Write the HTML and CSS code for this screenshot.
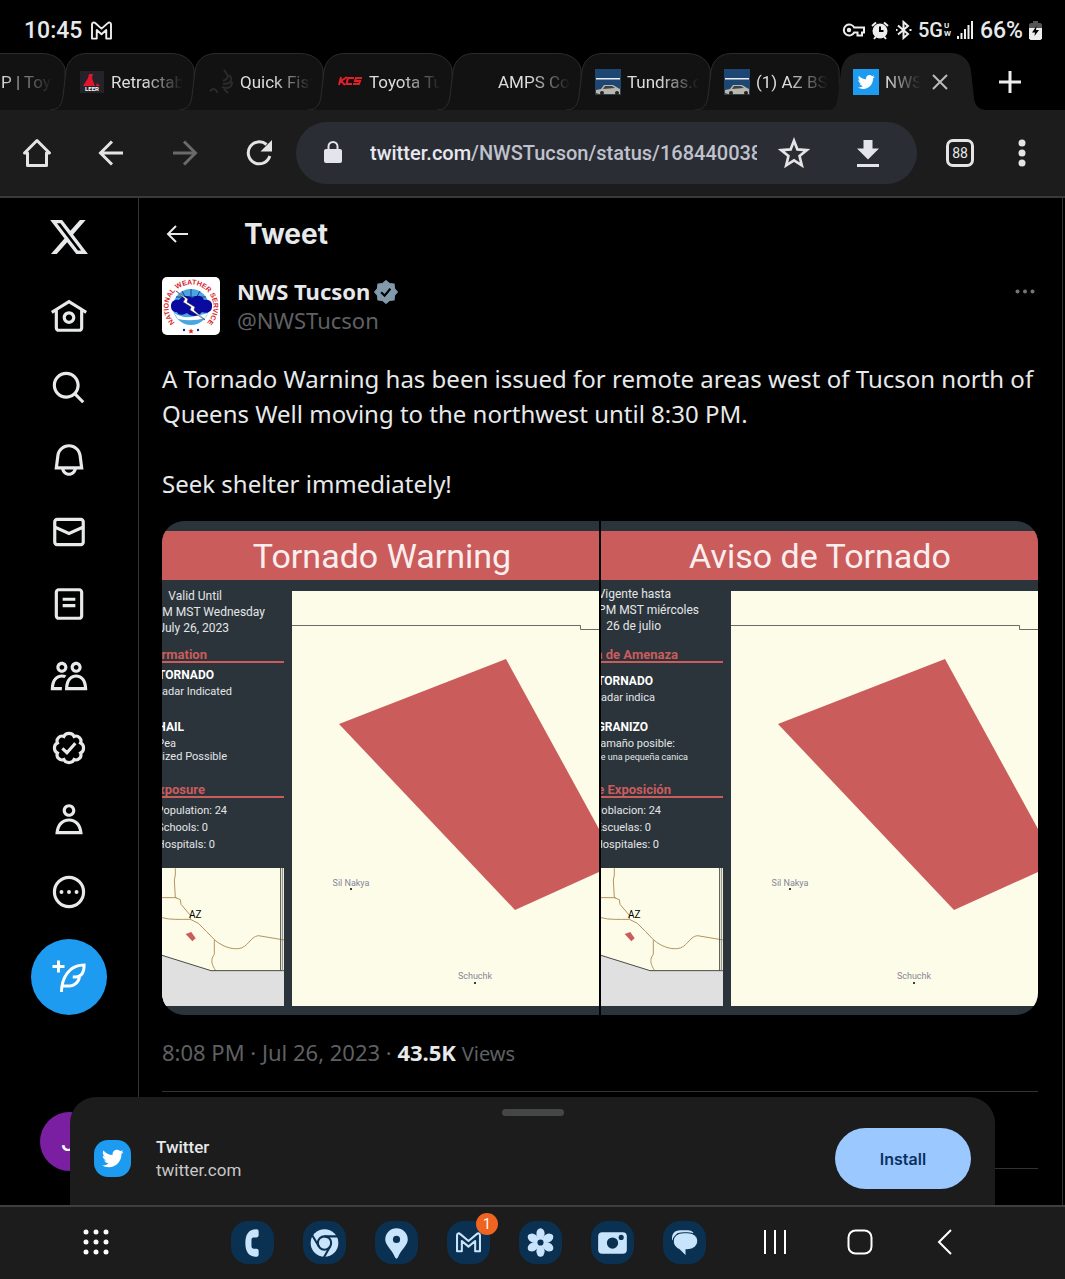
FILE: index.html
```html
<!DOCTYPE html>
<html lang="en">
<head>
    <meta charset="UTF-8">
    <meta name="viewport" content="width=device-width, initial-scale=1.0">
    <title>NWS Tucson on Twitter</title>
    <link rel="stylesheet" href="styles.css">
</head>
<body>

<!-- shared shapes -->
<svg class="defs" aria-hidden="true">
    <symbol id="tab-shape" viewBox="0 0 129 57" overflow="visible">
        <path d="M-14 57C-5 57-2 51-1 43L2 18C4 6 12 .5 23 .5H107C119 .5 128 7 130 16L131 57"/>
    </symbol>
    <symbol id="tab-active" viewBox="0 0 137 57" overflow="visible">
        <path d="M-10 57C-3 57-1 51 0 43L3 18C5 6 12 0 23 0H112C124 0 132 7 133 18L136 45C137 53 141 57 149 57"/>
    </symbol>
    <symbol id="bird" viewBox="0 0 24 24">
        <path d="M23.643 4.937c-.835.37-1.732.62-2.675.733.962-.576 1.7-1.49 2.048-2.578-.9.534-1.897.922-2.958 1.13-.85-.904-2.06-1.47-3.4-1.47-2.572 0-4.658 2.086-4.658 4.66 0 .364.042.718.12 1.06-3.873-.195-7.304-2.05-9.602-4.868-.4.69-.63 1.49-.63 2.342 0 1.616.823 3.043 2.072 3.878-.764-.025-1.482-.234-2.11-.583v.06c0 2.257 1.605 4.14 3.737 4.568-.392.106-.803.162-1.227.162-.3 0-.593-.028-.877-.082.593 1.85 2.313 3.198 4.352 3.234-1.595 1.25-3.604 1.995-5.786 1.995-.376 0-.747-.022-1.112-.065 2.062 1.323 4.51 2.093 7.14 2.093 8.57 0 13.255-7.098 13.255-13.254 0-.2-.005-.402-.014-.602.91-.658 1.7-1.477 2.323-2.41z"/>
    </symbol>
    <symbol id="gmail" viewBox="0 0 24 20">
        <path d="M2 18.500V3.500C2 1.500 4 1 5.400 2.200L12 8 18.600 2.200C20 1 22 1.500 22 3.500V18.500H17V9.500L12 14 7 9.500V18.500Z"/>
    </symbol>
    <symbol id="tundras" viewBox="0 0 26 26">
        <path fill="#1d4673" d="M0 0h26v26H0z"/>
        <path fill="#33404a" d="M0 20h26v6H0z"/>
        <path fill="#e8eef4" d="M1 9h24v1.500H1z"/>
        <path fill="#b9b6ae" d="M1 21l5-1 3-4h9l5 3 2 1v5H4l-3-1z"/>
        <path fill="#3a4148" d="M8 20l2-3h7l3 2z"/>
        <circle cx="7" cy="24" r="2" fill="#222"/><circle cx="22" cy="24" r="2" fill="#222"/>
    </symbol>
    <!-- main map and state inset, same on both alert cards -->
    <symbol id="alert-base" viewBox="0 0 437 494">
        <path fill="#2b343b" d="M0 0h437v494H0z"/>
        <path fill="#cb5c5c" d="M0 10h437v49H0z"/>
        <path fill="#fdfce8" d="M130 70h307v415H130z"/>
        <path fill="none" stroke="#6b6b66" d="M130 104.500H418.500V108.500H437"/>
        <path fill="#cb5c5c" d="M177 203L344 138 437 308V351L353 389Z"/>
        <path fill="#cb5c5c" d="M0 140h122v2H0zM0 275h122v2H0z"/>
        <circle cx="189" cy="368" r="1"/><circle cx="313" cy="462" r="1"/>
        <text class="place" x="189" y="365">Sil Nakya</text>
        <text class="place" x="313" y="458">Schuchk</text>
        <path fill="#fdfce8" d="M0 347h122v138H0z"/>
        <path fill="#e0e0e0" d="M0 434L49 449.500H122V485H0z"/>
        <g transform="translate(-12 244) scale(.3333)" fill="none" stroke-width="3">
            <path stroke="#b3935f" d="M76 310V330L73 345 76 398 91 404 93 418 122 452 121 463 145 475 170 500 193 524C215 543 240 553 265 551 295 548 300 515 325 512L402 525M36 398H80M36 458C60 465 90 463 121 463M193 524V568C180 585 186 600 197 617"/>
            <path stroke="#4a4a44" d="M36 571L183 617H402M392 309V617"/>
            <path stroke="#888" d="M398 309V617"/>
            <path fill="#cb5c5c" d="M107 507L124 501 137 520 127 529Z"/>
        </g>
        <text class="state" x="27" y="397">AZ</text>
    </symbol>
</svg>

<header class="status-bar">
    <div class="status-left">
        <span class="clock">10:45</span>
        <svg class="outline" width="23" height="19"><use href="#gmail"/></svg>
    </div>
    <div class="status-right">
        <svg width="23" height="16" viewBox="0 0 23 16" fill="none" stroke="#eee" stroke-width="2"><path d="M12.200 5.500H22V10.500H20V13.500H15.500V10.500H12.200A5.500 5.500 0 1 1 12.200 5.500Z"/><circle cx="7" cy="8" r="1.200"/></svg>
        <svg width="18" height="19" viewBox="0 0 18 19"><circle cx="9" cy="10" r="7.500" fill="#eee"/><path d="M9 5.500V10H12.500" stroke="#000" stroke-width="2" fill="none"/><path d="M1 5L5 1.500M17 5L13 1.500M3 18L5 15.500M15 18L13 15.500" stroke="#eee" stroke-width="2"/></svg>
        <svg width="17" height="20" viewBox="0 0 17 20" fill="none" stroke="#eee" stroke-width="2"><path d="M3 5.500L13 14 8.500 18V2L13 6 3 14.500"/><path d="M1 10H2.500M14.500 10H16.500"/></svg>
        <span class="network">5G</span><span class="uw">U<br>W</span>
        <svg width="17" height="18" viewBox="0 0 17 18" fill="#eee"><path d="M0 15h2v3H0zM3.500 12h2v6h-2zM7 8h2v10H7zM10.500 4h2v14h-2zM14 0h2v18h-2z"/></svg>
        <span class="battery">66%</span>
        <svg width="13" height="19" viewBox="0 0 13 19"><path fill="#555" d="M4 0h5v2h2.500L13 3.500V8H0V3.500L1.500 2H4z"/><path fill="#eee" d="M0 7h13v10.500L11.500 19h-10L0 17.500z"/><path d="M7.500 5L3 11.500H6L5.500 15 10 9H7z"/></svg>
    </div>
</header>

<div class="tabs">
    <div class="tab tab-cut">
        <svg class="tab-bg"><use href="#tab-shape"/></svg>
        <span class="tab-title">P | Toyo</span>
    </div>
    <div class="tab">
        <svg class="tab-bg"><use href="#tab-shape"/></svg>
        <svg class="favicon" viewBox="0 0 26 26"><path fill="#262229" d="M1 2h24v22H1z"/><path fill="#e0162b" d="M10 5h4l-1 4 3 8h-12l5-8zM18 14l3 3h-4z"/><text class="leer" x="13" y="22">LEER</text></svg>
        <span class="tab-title">Retractab</span>
    </div>
    <div class="tab">
        <svg class="tab-bg"><use href="#tab-shape"/></svg>
        <svg class="favicon" viewBox="0 0 26 26" fill="none" stroke="#2b2b2b" stroke-width="2"><path d="M16 1C20 6 22 9 15 12M21 6C25 10 24 15 15 15M24 13C24 19 19 20 14 18M2 22C6 18 9 21 9 24M16 20L20 24"/></svg>
        <span class="tab-title">Quick Fist</span>
    </div>
    <div class="tab">
        <svg class="tab-bg"><use href="#tab-shape"/></svg>
        <svg class="favicon" viewBox="0 0 26 26" fill="none" stroke="#e01f26" stroke-width="2"><path d="M4 8L2 16M10 8L4 12 8 16M17 9H11L9.500 15H15M25 9H19L18 12H23L22 15H16"/></svg>
        <span class="tab-title">Toyota Tu</span>
    </div>
    <div class="tab">
        <svg class="tab-bg"><use href="#tab-shape"/></svg>
        <svg class="favicon" viewBox="0 0 26 26"></svg>
        <span class="tab-title">AMPS Cor</span>
    </div>
    <div class="tab">
        <svg class="tab-bg"><use href="#tab-shape"/></svg>
        <svg class="favicon"><use href="#tundras"/></svg>
        <span class="tab-title">Tundras.co</span>
    </div>
    <div class="tab">
        <svg class="tab-bg"><use href="#tab-shape"/></svg>
        <svg class="favicon"><use href="#tundras"/></svg>
        <span class="tab-title">(1) AZ BS</span>
    </div>
    <div class="tab active">
        <svg class="tab-bg"><use href="#tab-active"/></svg>
        <svg class="favicon favicon-twitter"><use href="#bird"/></svg>
        <span class="tab-title">NWS</span>
        <button type="button" class="tab-close" aria-label="Close tab"><svg width="16" height="16" viewBox="0 0 16 16" stroke="#bbb" stroke-width="2"><path d="M1 1L15 15M15 1L1 15"/></svg></button>
    </div>
    <button type="button" class="new-tab" aria-label="New tab"><svg width="22" height="22" viewBox="0 0 22 22" stroke="#eee" stroke-width="3"><path d="M11 0V22M0 11H22"/></svg></button>
</div>

<div class="toolbar">
    <button type="button" aria-label="Home"><svg width="30" height="30" viewBox="0 0 30 30" fill="none" stroke="#e4e4e4" stroke-width="3" stroke-linejoin="round" stroke-linecap="round"><path d="M2.500 15L15 2.500 27.500 15H24.500V27.500H5.500V15Z"/></svg></button>
    <button type="button" aria-label="Back"><svg width="26" height="26" viewBox="0 0 26 26" fill="none" stroke="#e4e4e4" stroke-width="3"><path d="M25 13H3M14 1.500L2.500 13 14 24.500"/></svg></button>
    <button type="button" aria-label="Forward"><svg width="26" height="26" viewBox="0 0 26 26" fill="none" stroke="#6a6a6a" stroke-width="3"><path d="M1 13H23M12 1.500L23.500 13 12 24.500"/></svg></button>
    <button type="button" aria-label="Reload"><svg width="26" height="26" viewBox="0 0 26 26"><path fill="none" stroke="#e4e4e4" stroke-width="3" d="M20.500 4.500A11 11 0 1 0 23.800 16"/><path fill="#e4e4e4" d="M26 0V11.500H14.500Z"/></svg></button>
    <div class="omnibox">
        <svg class="lock" width="18" height="24" viewBox="0 0 18 24"><path fill="#e4e4ec" d="M2 8h14a2 2 0 0 1 2 2v10a2 2 0 0 1-2 2H2a2 2 0 0 1-2-2V10a2 2 0 0 1 2-2z"/><path fill="none" stroke="#e4e4ec" stroke-width="2" d="M4.500 9V5.500a4.500 4.500 0 0 1 9 0V9"/></svg>
        <span class="url"><b>twitter.com</b>/NWSTucson/status/1684400380</span>
        <button type="button" aria-label="Bookmark"><svg width="32" height="32" viewBox="0 0 30 30" fill="none" stroke="#e4e4e4" stroke-width="2.500"><path d="M15 3.500L18.200 11.600 27 12.300 20.200 17.900 22.300 26.500 15 21.900 7.700 26.500 9.800 17.900 3 12.300 11.800 11.600Z"/></svg></button>
        <button type="button" aria-label="Download"><svg width="22" height="28" viewBox="0 0 22 28" fill="#e4e4ec"><path d="M6.500 1h9v8.500H22L11 20.500 0 9.500h6.500zM0 25h22v3H0z"/></svg></button>
    </div>
    <button type="button" class="tab-count"><span>88</span></button>
    <button type="button" class="menu" aria-label="Menu"><svg width="8" height="28" viewBox="0 0 8 28" fill="#e4e4e4"><circle cx="4" cy="4" r="3.500"/><circle cx="4" cy="14" r="3.500"/><circle cx="4" cy="24" r="3.500"/></svg></button>
</div>

<main class="page">
    <nav class="sidebar">
        <a class="logo" href="#" aria-label="X"><svg viewBox="0 0 24 24"><path d="M18.244 2.250h3.308l-7.227 8.260 8.502 11.240H16.170l-5.214-6.817L4.990 21.750H1.680l7.730-8.835L1.254 2.250H8.080l4.713 6.231zm-1.161 17.520h1.833L7.084 4.126H5.117z"/></svg></a>
        <a href="#" aria-label="Home"><svg viewBox="0 0 24 24"><path d="M12 9c-2.209 0-4 1.791-4 4s1.791 4 4 4 4-1.791 4-4-1.791-4-4-4zm0 6c-1.105 0-2-.895-2-2s.895-2 2-2 2 .895 2 2-.895 2-2 2zm0-13.304L.622 8.807l1.060 1.696L3 9.679V19.500C3 20.881 4.119 22 5.500 22h13c1.381 0 2.500-1.119 2.500-2.500V9.679l1.318.824 1.060-1.696L12 1.696zM19 19.500c0 .276-.224.500-.500.500h-13c-.276 0-.500-.224-.500-.500V8.429l7-4.375 7 4.375V19.500z"/></svg></a>
        <a href="#" aria-label="Search"><svg viewBox="0 0 24 24"><path d="M10.250 3.750c-3.590 0-6.500 2.910-6.500 6.500s2.910 6.500 6.500 6.500c1.795 0 3.419-.726 4.596-1.904 1.178-1.177 1.904-2.801 1.904-4.596 0-3.590-2.910-6.500-6.500-6.500zm-8.500 6.500c0-4.694 3.806-8.500 8.500-8.500s8.500 3.806 8.500 8.500c0 1.986-.682 3.815-1.824 5.262l4.781 4.781-1.414 1.414-4.781-4.781c-1.447 1.142-3.276 1.824-5.262 1.824-4.694 0-8.500-3.806-8.500-8.500z"/></svg></a>
        <a href="#" aria-label="Notifications"><svg viewBox="0 0 24 24"><path d="M19.993 9.042C19.480 5.017 16.054 2 11.996 2s-7.490 3.021-7.999 7.051L2.866 18H7.100c.463 2.282 2.481 4 4.900 4s4.437-1.718 4.900-4h4.236l-1.143-8.958zM12 20c-1.306 0-2.417-.835-2.829-2h5.658c-.412 1.165-1.523 2-2.829 2zm-6.866-4l.847-6.698C6.364 6.272 8.941 4 11.996 4s5.627 2.268 6.013 5.295L18.864 16H5.134z"/></svg></a>
        <a href="#" aria-label="Messages"><svg viewBox="0 0 24 24"><path d="M1.998 5.500c0-1.381 1.119-2.500 2.500-2.500h15c1.381 0 2.500 1.119 2.500 2.500v13c0 1.381-1.119 2.500-2.500 2.500h-15c-1.381 0-2.500-1.119-2.500-2.500v-13zm2.500-.500c-.276 0-.500.224-.500.500v2.764l8 3.638 8-3.636V5.500c0-.276-.224-.500-.500-.500h-15zm15.500 5.463l-8 3.636-8-3.638V18.500c0 .276.224.500.500.500h15c.276 0 .500-.224.500-.500v-8.037z"/></svg></a>
        <a href="#" aria-label="Lists"><svg viewBox="0 0 24 24"><path d="M3 4.500C3 3.120 4.120 2 5.500 2h13C19.880 2 21 3.120 21 4.500v15c0 1.380-1.120 2.500-2.500 2.500h-13C4.120 22 3 20.880 3 19.500v-15zM5.500 4c-.280 0-.500.220-.500.500v15c0 .280.220.500.500.500h13c.280 0 .500-.220.500-.500v-15c0-.280-.220-.500-.500-.500h-13zM16 10H8V8h8v2zm-8 2h8v2H8v-2z"/></svg></a>
        <a href="#" aria-label="Communities"><svg viewBox="0 0 24 24"><path d="M7.501 19.917L7.471 21H.472l.029-1.027c.184-6.618 3.736-8.977 7-8.977.963 0 1.950.212 2.870.672-.444.478-.851 1.030-1.212 1.656-.507-.204-1.054-.329-1.658-.329-2.767 0-4.570 2.223-4.938 6.004H7.560c-.023.302-.050.599-.059.918zm15.998.056L23.528 21H9.472l.029-1.027c.184-6.618 3.736-8.977 7-8.977s6.816 2.358 7 8.977zM21.437 19c-.367-3.781-2.170-6.004-4.938-6.004s-4.570 2.223-4.938 6.004h9.875zm-4.938-9c-.799 0-1.527-.279-2.116-.730-.836-.640-1.384-1.638-1.384-2.770 0-1.930 1.567-3.500 3.500-3.500s3.500 1.570 3.500 3.500c0 1.132-.548 2.130-1.384 2.770-.589.451-1.317.730-2.116.730zm-1.500-3.500c0 .827.673 1.500 1.500 1.500s1.500-.673 1.500-1.500-.673-1.500-1.500-1.500-1.500.673-1.500 1.500zM7.500 3C9.433 3 11 4.570 11 6.500S9.433 10 7.500 10 4 8.430 4 6.500 5.567 3 7.500 3zm0 2C6.673 5 6 5.673 6 6.500S6.673 8 7.500 8 9 7.327 9 6.500 8.327 5 7.500 5z"/></svg></a>
        <a href="#" aria-label="Verified"><svg class="stroked" viewBox="0 0 24 24"><path d="M8.800 4.700C9.300 3.500 10.500 2.800 12 2.800s2.700.700 3.200 1.900c1.200-.500 2.600-.100 3.400.700s1.200 2.200.700 3.400c1.200.500 1.900 1.700 1.900 3.200s-.700 2.700-1.900 3.200c.500 1.200.100 2.600-.700 3.400s-2.200 1.200-3.400.700c-.500 1.200-1.700 1.900-3.200 1.900s-2.700-.700-3.200-1.900c-1.200.500-2.600.100-3.400-.700s-1.200-2.200-.700-3.400C3.500 14.700 2.800 13.500 2.800 12s.700-2.700 1.900-3.200c-.500-1.200-.100-2.600.700-3.400s2.200-1.200 3.400-.700zM7.800 12.200L10.700 15 16 9"/></svg></a>
        <a href="#" aria-label="Profile"><svg viewBox="0 0 24 24"><path d="M5.651 19h12.698c-.337-1.800-1.023-3.210-1.945-4.190C15.318 13.650 13.838 13 12 13s-3.317.650-4.404 1.810c-.922.980-1.608 2.390-1.945 4.190zm.486-5.560C7.627 11.850 9.648 11 12 11s4.373.850 5.863 2.440c1.477 1.580 2.366 3.800 2.632 6.460l.110 1.100H3.395l.110-1.100c.266-2.660 1.155-4.880 2.632-6.460zM12 4c-1.105 0-2 .900-2 2s.895 2 2 2 2-.900 2-2-.895-2-2-2zM8 6c0-2.210 1.791-4 4-4s4 1.790 4 4-1.791 4-4 4-4-1.790-4-4z"/></svg></a>
        <a href="#" aria-label="More"><svg viewBox="0 0 24 24"><circle class="ring" cx="12" cy="12" r="9.200"/><circle cx="7.250" cy="12" r="1.250"/><circle cx="12" cy="12" r="1.250"/><circle cx="16.750" cy="12" r="1.250"/></svg></a>
        <button type="button" class="compose" aria-label="Compose"><svg viewBox="0 0 24 24"><path d="M23 3c-6.620-.100-10.380 2.421-13.050 6.030C7.290 12.610 6 17.331 6 22h2c0-1.007.070-2.012.190-3H12c4.100 0 7.480-3.082 7.940-7.054C22.790 10.147 23.170 6.359 23 3zm-7 8h-1.500v2H16c.630-.016 1.200-.080 1.720-.188C16.950 15.240 14.680 17 12 17H8.550c.570-2.512 1.570-4.851 3-6.780 2.160-2.912 5.290-4.911 9.450-5.187C20.950 8.079 19.900 11 16 11zM4 9V6H1V4h3V1h2v3h3v2H6v3H4z"/></svg></button>
        <a class="account" href="#">J</a>
    </nav>

    <article class="tweet">
        <div class="tweet-head">
            <button type="button" aria-label="Back"><svg width="22" height="18" viewBox="0 0 22 18" fill="none" stroke="#e7e9ea" stroke-width="2"><path d="M22 9H2M10 1L2 9 10 17"/></svg></button>
            <h1>Tweet</h1>
        </div>

        <div class="author">
            <svg class="avatar" viewBox="0 0 58 58">
                <path fill="#fff" d="M0 0h58v58H0z"/>
                <path id="seal" fill="none" d="M17 49A22.500 22.500 0 1 1 41 49"/>
                <text class="seal-text"><textPath href="#seal" startOffset="50%">NATIONAL WEATHER SERVICE</textPath></text>
                <circle cx="29" cy="30" r="18" fill="#4aa6e0"/>
                <path stroke="#1b3f8f" d="M29 12V30M20 14L26 25M38 14L32 25M14 20H44" fill="none"/>
                <path fill="#fff" d="M12 36Q20 41 28 40T46 36L43 41Q30 45 16 42Z"/>
                <path fill="#0a0aa0" d="M9 29C9 24 13 22 17 23C20 18 27 18 30 21C35 17 41 19 42 23C48 22 51 26 50 30C50 35 44 37 40 35C36 40 29 40 25 36C20 39 16 38 15 35C11 35 9 33 9 29Z"/>
                <path fill="#fff" stroke="#223" stroke-width=".5" d="M14 14L26 22 25 25 33 30 32 33 43 43 28 33 29 30 21 25 23 22Z"/>
                <path fill="#d22" d="M29 51.500l.8 1.700 1.900.2-1.400 1.200.4 1.900-1.700-1-1.700 1 .4-1.900-1.400-1.200 1.900-.2z"/>
                <circle cx="22" cy="53" r="1.200" fill="#12a"/><circle cx="36" cy="53" r="1.200" fill="#12a"/>
            </svg>
            <div class="names">
                <div class="name">NWS Tucson
                    <svg width="24" height="24" viewBox="1 1 22 22"><path fill="#829aab" d="M12 1.500L15 4.200 19.400 4.600 19.800 9 22.500 12 19.800 15 19.400 19.400 15 19.800 12 22.500 9 19.800 4.600 19.400 4.200 15 1.500 12 4.200 9 4.600 4.600 9 4.200Z" stroke="#829aab" stroke-linejoin="round"/><path fill="none" stroke="#000" stroke-width="2" d="M7.500 12.200L10.700 15.300 16 9"/></svg>
                </div>
                <div class="handle">@NWSTucson</div>
            </div>
            <button type="button" class="dots" aria-label="More"><svg width="20" height="5" viewBox="0 0 20 5" fill="#71767b"><circle cx="2.500" cy="2.500" r="2"/><circle cx="10" cy="2.500" r="2"/><circle cx="17.500" cy="2.500" r="2"/></svg></button>
        </div>

        <p class="tweet-text">A Tornado Warning has been issued for remote areas west of Tucson north of Queens Well moving to the northwest until 8:30 PM.<br><br>Seek shelter immediately!</p>

        <div class="media">
            <svg viewBox="0 0 437 494">
                <use href="#alert-base"/>
                <text class="alert-title" x="220" y="47">Tornado Warning</text>
                <g class="date"><text x="60" y="79">Valid Until</text><text x="103" y="95">PM MST Wednesday</text><text x="67" y="111">July 26, 2023</text></g>
                <g class="section"><text x="45" y="138">Information</text><text x="43" y="273">Exposure</text></g>
                <g class="hazard"><text x="52" y="158">TORNADO</text><text x="22" y="210">HAIL</text></g>
                <g class="detail"><text x="70" y="174">Radar Indicated</text><text x="14" y="226">Pea</text><text x="65" y="239">Sized Possible</text><text x="65" y="293">Population: 24</text><text x="46" y="310">Schools: 0</text><text x="53" y="327">Hospitals: 0</text></g>
            </svg>
            <svg viewBox="0 0 437 494">
                <use href="#alert-base"/>
                <text class="alert-title" x="219" y="47">Aviso de Tornado</text>
                <g class="date"><text x="70" y="77">Vigente hasta</text><text x="98" y="93">PM MST miércoles</text><text x="60" y="109">26 de julio</text></g>
                <g class="section"><text x="77" y="138">Información de Amenaza</text><text x="70" y="273">de Exposición</text></g>
                <g class="hazard"><text x="52" y="164">TORNADO</text><text x="47" y="210">GRANIZO</text></g>
                <g class="detail"><text x="54" y="180">Radar indica</text><text x="74" y="226">Tamaño posible:</text><text class="small" x="87" y="239">de una pequeña canica</text><text x="60" y="293">Poblacion: 24</text><text x="50" y="310">Escuelas: 0</text><text x="58" y="327">Hospitales: 0</text></g>
            </svg>
        </div>

        <div class="meta">8:08 PM · Jul 26, 2023 · <b>43.5K</b> <span>Views</span></div>
        <div class="stats"></div>
    </article>

    <section class="install-sheet">
        <div class="grip"></div>
        <div class="sheet-row">
            <svg class="app-icon"><use href="#bird"/></svg>
            <div class="app-name"><strong>Twitter</strong><span>twitter.com</span></div>
            <button type="button" class="install">Install</button>
        </div>
    </section>
</main>

<footer class="dock-bar">
    <button type="button" class="apps" aria-label="Apps"><svg width="26" height="26" viewBox="0 0 26 26" fill="#fff"><circle cx="3" cy="3" r="2.500"/><circle cx="13" cy="3" r="2.500"/><circle cx="23" cy="3" r="2.500"/><circle cx="3" cy="13" r="2.500"/><circle cx="13" cy="13" r="2.500"/><circle cx="23" cy="13" r="2.500"/><circle cx="3" cy="23" r="2.500"/><circle cx="13" cy="23" r="2.500"/><circle cx="23" cy="23" r="2.500"/></svg></button>
    <div class="dock">
        <button type="button" aria-label="Phone"><svg viewBox="0 0 42 42"><path d="M25 8Q27 8 27 10V14Q27 16 25 16H22Q20 16 20 18V25Q20 27 22 27H25Q27 27 27 29V33Q27 35 25 35Q14 35 14 21.500T25 8Z"/></svg></button>
        <button type="button" aria-label="Chrome"><svg viewBox="0 0 42 42"><circle cx="21" cy="21.500" r="13.500"/><g fill="none" stroke="#0b3152" stroke-width="2"><circle cx="21" cy="21.500" r="6.500"/><path d="M21 15H34M15.400 24.700L9 14M26.600 24.700L20.500 35.500"/></g></svg></button>
        <button type="button" aria-label="Maps"><svg viewBox="0 0 42 42"><path d="M21 7A11 11 0 0 1 32 18C32 24 25 28 22.500 35.500Q21 38 19.500 35.500C17 28 10 24 10 18A11 11 0 0 1 21 7Z"/><circle cx="21" cy="18" r="3.500" fill="#0b3152"/></svg></button>
        <button type="button" aria-label="Gmail"><svg class="outline" viewBox="-9 -11 42 42"><path d="M.800 18.500V3C.800 1 2.500.600 4 1.800L12 8.500 20 1.800C21.500.600 23.200 1 23.200 3V18.500H18.500V8.500L12 14 5.500 8.500V18.500Z"/></svg><span class="badge">1</span></button>
        <button type="button" aria-label="Gallery"><svg viewBox="0 0 42 42"><ellipse cx="21" cy="12.500" rx="4" ry="5.500"/><ellipse cx="21" cy="12.500" rx="4" ry="5.500" transform="rotate(60 21 21)"/><ellipse cx="21" cy="12.500" rx="4" ry="5.500" transform="rotate(120 21 21)"/><ellipse cx="21" cy="12.500" rx="4" ry="5.500" transform="rotate(180 21 21)"/><ellipse cx="21" cy="12.500" rx="4" ry="5.500" transform="rotate(240 21 21)"/><ellipse cx="21" cy="12.500" rx="4" ry="5.500" transform="rotate(300 21 21)"/><circle cx="21" cy="21" r="5.500"/><circle cx="21" cy="21" r="3" fill="#0b3152"/></svg></button>
        <button type="button" aria-label="Camera"><svg viewBox="0 0 42 42"><rect x="7" y="11" width="28" height="21" rx="4"/><circle cx="21" cy="21.500" r="5.500" fill="#0b3152"/><circle cx="29.500" cy="16" r="2.500" fill="#0b3152"/></svg></button>
        <button type="button" aria-label="Messages"><svg viewBox="0 0 42 42"><path d="M17 9H24C27 9 29 10 30 12H14L9 19C8 13 11 9 17 9Z"/><path stroke="#0b3152" d="M20 11.500H24C30 11.500 34 15 34 19.500S30 28 24 28H22.500V34.500L16 28C12 26 10 23 10 19.500C10 15 14 11.500 20 11.500Z"/></svg></button>
    </div>
    <div class="system-nav">
        <button type="button" aria-label="Recents"><svg width="26" height="26" viewBox="0 0 26 26" stroke="#fff" stroke-width="2"><path d="M3 1V25M13 1V25M23 1V25"/></svg></button>
        <button type="button" aria-label="Home"><svg width="26" height="26" viewBox="0 0 26 26" fill="none" stroke="#fff" stroke-width="2"><rect x="1.500" y="1.500" width="23" height="23" rx="7"/></svg></button>
        <button type="button" aria-label="Back"><svg width="26" height="26" viewBox="0 0 26 26" fill="none" stroke="#fff" stroke-width="2"><path d="M19 1L7 13 19 25"/></svg></button>
    </div>
</footer>

</body>
</html>
```
FILE: styles.css
```css
* {
    box-sizing: border-box;
}
body {
    margin: 0;
    height: 100vh;
    display: flex;
    flex-direction: column;
    overflow: hidden;
    background-color: #000;
    color: #e7e9ea;
    font-family: Roboto, "Noto Sans", sans-serif;
}
button {
    display: flex;
    align-items: center;
    justify-content: center;
    padding: 0;
    border: none;
    background: none;
    color: inherit;
    font: inherit;
    cursor: pointer;
}
.defs {
    position: absolute;
    width: 0;
    height: 0;
}
.outline {
    fill: none;
    stroke: #eee;
    stroke-width: 2;
    stroke-linejoin: round;
}

/* status bar */
.status-bar {
    flex: none;
    display: flex;
    justify-content: space-between;
    height: 53px;
    padding: 7px 23px 0 24px;
}
.status-left,
.status-right {
    display: flex;
    align-items: center;
    gap: 8px;
}
.clock,
.battery {
    font-size: 23px;
    font-weight: 500;
}
.status-right {
    gap: 6px;
}
.network {
    font-size: 20px;
    font-weight: 500;
}
.uw {
    margin-left: -5px;
    font-size: 8px;
    font-weight: bold;
    line-height: 8px;
}

/* tab strip */
.tabs {
    flex: none;
    display: flex;
    height: 57px;
    overflow: hidden;
}
.tab {
    position: relative;
    flex: 0 0 129px;
    display: flex;
    align-items: center;
    gap: 6px;
    padding-left: 15px;
    font-size: 17px;
    color: #ddd;
}
.tab-cut {
    flex-basis: 64px;
    padding-left: 1px;
}
.tab-bg {
    position: absolute;
    right: 0;
    top: 0;
    width: 129px;
    height: 57px;
    overflow: visible;
    fill: #121212;
    stroke: #2c2c2c;
}
.active .tab-bg {
    width: 137px;
    fill: #1c1c1c;
    stroke: none;
}
.favicon {
    position: relative;
    flex: none;
    width: 26px;
    height: 26px;
}
.favicon-twitter {
    padding: 4px;
    background-color: #1d9bf0;
    fill: #fff;
}
.tab-title {
    position: relative;
    width: 72px;
    overflow: hidden;
    white-space: nowrap;
    -webkit-mask-image: linear-gradient(to right, #000 45%, transparent);
    mask-image: linear-gradient(to right, #000 45%, transparent);
}
.tab-cut .tab-title {
    width: 52px;
    -webkit-mask-image: linear-gradient(to right, #000, transparent);
    mask-image: linear-gradient(to right, #000, transparent);
}
.tab.active {
    flex-basis: 137px;
}
.active .tab-title {
    width: 36px;
    -webkit-mask-image: linear-gradient(to right, #000, transparent);
    mask-image: linear-gradient(to right, #000, transparent);
}
.tab-close {
    position: relative;
    margin-left: 5px;
}
.leer {
    font-size: 6px;
    font-weight: bold;
    fill: #fff;
    text-anchor: middle;
}
.new-tab {
    width: 70px;
}

/* address bar */
.toolbar {
    flex: none;
    display: flex;
    align-items: center;
    height: 88px;
    padding-right: 12px;
    background-color: #1c1c1c;
    border-bottom: 2px solid #3a3a3c;
}
.toolbar > button {
    width: 74px;
    height: 62px;
}
.omnibox {
    flex: 1;
    min-width: 0;
    display: flex;
    align-items: center;
    height: 62px;
    margin-right: 12px;
    padding: 0 12px 0 28px;
    border-radius: 31px;
    background-color: #2b2d35;
}
.lock {
    flex: none;
    margin-right: 28px;
}
.url {
    flex: 1;
    overflow: hidden;
    white-space: nowrap;
    font-size: 20px;
    font-weight: 500;
    color: #bfc2cc;
}
.url b {
    font-weight: 500;
    color: #e8e8ee;
}
.omnibox button {
    flex: none;
    width: 74px;
}
.toolbar > .tab-count,
.toolbar > .menu {
    width: 62px;
}
.tab-count span {
    width: 28px;
    height: 28px;
    border: 3px solid #e4e4e4;
    border-radius: 7px;
    font-size: 14px;
    line-height: 22px;
}

/* page */
.page {
    position: relative;
    flex: 1;
    min-height: 0;
    display: flex;
    padding-right: 2px;
    overflow: hidden;
    font-family: "Noto Sans", sans-serif;
}
.sidebar {
    flex: 0 0 139px;
    display: flex;
    flex-direction: column;
    align-items: center;
    border-right: 1px solid #2f3336;
}
.sidebar a {
    flex: none;
    display: flex;
    align-items: center;
    justify-content: center;
    width: 72px;
    height: 72px;
}
.sidebar svg {
    width: 38px;
    height: 38px;
    fill: #e7e9ea;
}
.sidebar .logo {
    height: 78px;
    margin-bottom: 4px;
}
.logo svg {
    width: 42px;
    height: 42px;
}
.sidebar .stroked,
.sidebar .ring {
    fill: none;
    stroke: #e7e9ea;
    stroke-width: 2;
}
.compose {
    flex: none;
    width: 76px;
    height: 76px;
    margin-top: 11px;
    border-radius: 50%;
    background-color: #1d9bf0;
}
.sidebar .compose svg {
    width: 36px;
    height: 36px;
    fill: #fff;
}
.sidebar .account {
    width: 59px;
    height: 59px;
    margin: auto 0 34px;
    border-radius: 50%;
    background-color: #7b1fa2;
    color: #fff;
    font-family: Roboto, sans-serif;
    font-size: 28px;
    text-decoration: none;
}
.tweet {
    flex: 1;
    min-width: 0;
    padding: 0 24px 0 23px;
    border-right: 1px solid #2f3336;
}
.tweet-head {
    display: flex;
    align-items: center;
    gap: 56px;
    height: 71px;
    padding-left: 4px;
}
.tweet-head h1 {
    margin: 0;
    font-family: Inter, sans-serif;
    font-size: 28px;
}
.author {
    display: flex;
    align-items: flex-start;
    gap: 17px;
    margin-top: 8px;
}
.avatar {
    width: 58px;
    height: 58px;
    border-radius: 5px;
}
.seal-text {
    font: bold 7px "Liberation Sans", sans-serif;
    fill: #d8222a;
    text-anchor: middle;
}
.names {
    flex: 1;
    font-size: 22px;
    line-height: 29px;
}
.name {
    display: flex;
    align-items: center;
    gap: 4px;
    font-weight: bold;
}
.handle,
.meta {
    color: #5f6063;
}
.dots {
    width: 26px;
    height: 29px;
}
.tweet-text {
    margin: 26px 0 20px;
    font-size: 24px;
    line-height: 35px;
}
.media {
    display: grid;
    grid-template-columns: 1fr 1fr;
    gap: 2px;
    overflow: hidden;
    border-radius: 22px;
    font-family: Roboto, sans-serif;
}
.media svg {
    display: block;
    width: 100%;
}
.place {
    font: 9px Roboto, sans-serif;
    fill: #85859a;
    text-anchor: middle;
}
.state {
    font: 10px Roboto, sans-serif;
}
.alert-title {
    font-size: 34px;
    fill: #fbeeee;
    text-anchor: middle;
}
.date,
.section,
.hazard,
.detail {
    font-size: 12px;
    fill: #e4e6e7;
    text-anchor: end;
}
.section {
    font-size: 13px;
    font-weight: bold;
    fill: #cb5c5c;
}
.hazard {
    font-weight: bold;
    fill: #fff;
}
.detail {
    font-size: 11px;
}
.small {
    font-size: 9px;
}
.meta {
    padding: 22px 0;
    border-bottom: 1px solid #2f3336;
    font-size: 22px;
    line-height: 31px;
}
.meta b {
    color: #e7e9ea;
}
.meta span {
    font-size: 20px;
}
.stats {
    height: 77px;
    border-bottom: 1px solid #2f3336;
}

/* install prompt over the page */
.install-sheet {
    position: absolute;
    left: 70px;
    right: 70px;
    bottom: 0;
    height: 108px;
    border-radius: 26px 26px 0 0;
    background-color: #1c1c1c;
    font-family: Roboto, sans-serif;
}
.grip {
    width: 62px;
    height: 7px;
    margin: 12px auto;
    border-radius: 4px;
    background-color: #444746;
}
.sheet-row {
    display: flex;
    align-items: center;
    padding: 0 24px;
}
.app-icon {
    width: 37px;
    height: 37px;
    padding: 7px;
    border-radius: 14px;
    background-color: #1d9bf0;
    fill: #fff;
}
.app-name {
    flex: 1;
    display: flex;
    flex-direction: column;
    margin-left: 25px;
    font-size: 17px;
    line-height: 23px;
}
.app-name strong {
    font-weight: 500;
}
.app-name span {
    color: #c8c8c8;
}
.install {
    width: 136px;
    height: 61px;
    border-radius: 31px;
    background-color: #9ac8ff;
    color: #0a305f;
    font: 600 16px Inter, sans-serif;
}

/* bottom bar */
.dock-bar {
    flex: none;
    display: flex;
    align-items: center;
    height: 74px;
    padding: 0 107px 2px 83px;
    background-color: #1c1c1c;
    border-top: 2px solid #3e3f40;
}
.dock {
    display: flex;
    gap: 29px;
    margin-left: 122px;
}
.dock button {
    position: relative;
    width: 43px;
    height: 43px;
    border-radius: 17px;
    background-color: #0b3152;
}
.dock svg {
    width: 43px;
    height: 43px;
    fill: #c8e4fc;
}
.dock .outline {
    fill: none;
    stroke: #c8e4fc;
}
.badge {
    position: absolute;
    top: -8px;
    right: -8px;
    width: 22px;
    height: 22px;
    border-radius: 50%;
    background-color: #ee6420;
    color: #fff;
    font-size: 14px;
    line-height: 22px;
}
.system-nav {
    display: flex;
    gap: 59px;
    margin-left: auto;
}
```
